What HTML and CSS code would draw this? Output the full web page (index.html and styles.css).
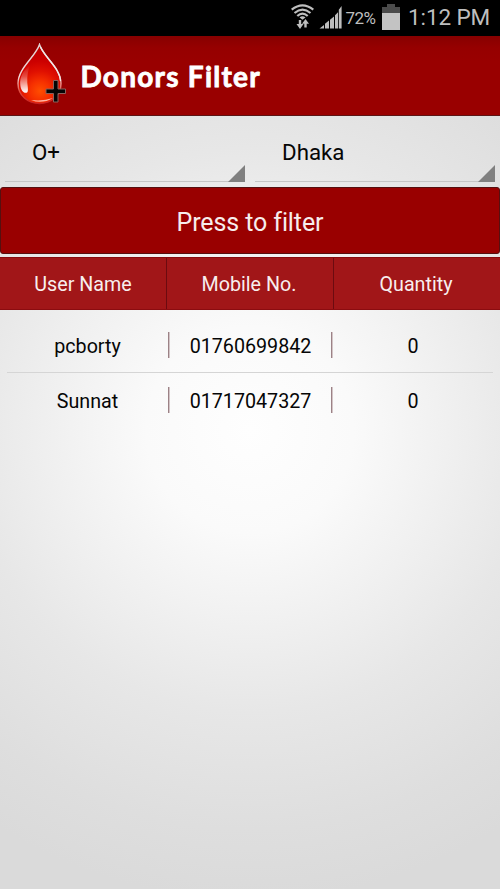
FILE: index.html
```html
<!DOCTYPE html>
<html lang="en">
<head>
<meta charset="utf-8">
<title>Donors Filter</title>
<link rel="stylesheet" href="styles.css">
</head>
<body>
<div class="status">
  <svg class="wifi" width="24" height="26" viewBox="0 0 24 26" fill="none" stroke="#bebebe">
    <path d="M.7 5.700Q11.500-2.800 22.300 5.700M3.500 9Q11.500 2.400 19.500 9M6.300 12Q11.500 7.200 16.700 12" stroke-width="2.200"/>
    <path d="M8.500 13.600Q11.500 10.800 14.500 13.600L11.500 15.800Z" fill="#bebebe" stroke="none"/>
    <path d="M9 16v5.500M14.500 23.500V18" stroke-width="2.400"/>
    <path d="M5.500 20h7L9 25ZM11 19.800h7L14.500 15Z" fill="#bebebe" stroke="none"/>
  </svg>
  <svg class="signal" width="24" height="24" viewBox="0 0 24 24" fill="#bebebe">
    <path d="M.5 23.500 5 20v3.500ZM6 18.800l4-3.300v8H6ZM11 14.800l4-3.300v12h-4ZM16 10.300l3-3v16.200H16ZM19.800 4.800 22.600 1v22.500h-2.800Z"/>
  </svg>
  <span class="percent">72%</span>
  <svg class="battery" width="18" height="26" viewBox="0 0 18 26">
    <path fill="#4b4b4b" d="M5 0h8v3h5v6H0V3h5z"/><path fill="#c3c3c3" d="M0 9h18v17H0z"/>
  </svg>
  <span class="time">1:12 PM</span>
</div>
<header class="bar">
  <svg class="logo" width="50" height="64" viewBox="0 0 50 64">
    <defs>
      <radialGradient id="blood" gradientUnits="userSpaceOnUse" cx="23" cy="48" r="40">
        <stop offset="0" stop-color="#ff4e00"/><stop offset=".25" stop-color="#f63000"/><stop offset=".5" stop-color="#e01000"/><stop offset=".75" stop-color="#cc0000"/><stop offset="1" stop-color="#c00000"/>
      </radialGradient>
      <linearGradient id="rim" x1="0" y1="0" x2="0" y2="1">
        <stop offset="0" stop-color="#e0d4d4"/><stop offset=".55" stop-color="#f3dada"/><stop offset=".8" stop-color="#dd4a3c"/><stop offset="1" stop-color="#c82020"/>
      </linearGradient>
      <linearGradient id="shine" x1="0" y1="0" x2="0" y2="1">
        <stop offset="0" stop-color="#fff" stop-opacity="0"/><stop offset=".4" stop-color="#fff" stop-opacity=".25"/><stop offset="1" stop-color="#fff"/>
      </linearGradient>
    </defs>
    <path d="M22.500 1.500C18.500 14 1 25 1 40.500 1 52.500 11 60.500 22.500 60.500S44 52.500 44 40.500C44 25 26.500 14 22.500 1.500Z" fill="url(#blood)" stroke="url(#rim)" stroke-width="1.400"/>
    <path d="M23.500 4C28 15 43 25 43.500 38" fill="none" stroke="#f0e8e8" stroke-width="1.300"/>
    <path d="M13 22C6 28 2.500 34 3.300 42c.5 5 3 8.300 6 7.800 2.500-.5 1.500-5 1-10C10 33 11 27 13 22Z" fill="url(#shine)"/>
    <path d="M14 57Q25 61.500 36 55 26 58.500 14 57Z" fill="#ffb5a5"/>
    <path d="M36.500 37.500h4.500v8.500h7.500v4.500H41v8.500h-4.500v-8.500H29V46h7.500z" fill="#050505" stroke="#8a625d" stroke-width="1"/>
  </svg>
  <h1 class="title">Donors Filter</h1>
</header>
<main>
  <div class="spinners">
    <div class="spinner"><span>O+</span></div>
    <div class="spinner"><span>Dhaka</span></div>
  </div>
  <button class="filter">Press to filter</button>
  <div class="head"><div>User Name</div><div>Mobile No.</div><div>Quantity</div></div>
  <div class="list">
    <div class="row"><div>pcborty</div><i></i><div>01760699842</div><i></i><div>0</div></div>
    <div class="row"><div>Sunnat</div><i></i><div>01717047327</div><i></i><div>0</div></div>
  </div>
</main>
</body>
</html>
```
FILE: styles.css
```css
* { box-sizing: border-box; }
body {
  margin: 0;
  width: 500px;
  height: 889px;
  overflow: hidden;
  font-family: Roboto, sans-serif;
  color: #060606;
  background: radial-gradient(circle 470px at 250px 430px, #fefefe 0, #fafafa 22%, #e7e7e7 60%, #dedede 85%, #dadada 100%);
}
.status {
  display: flex;
  height: 36px;
  padding-left: 291px;
  background: #000;
  color: #bebebe;
  white-space: nowrap;
}
.status svg { flex: none; }
.wifi { margin-top: 4px; }
.signal { margin: 5px 0 0 4px; }
.percent { width: 39px; padding-left: 2.500px; font-size: 17px; line-height: 36px; letter-spacing: -.5px; }
.battery { margin-top: 4px; }
.time { padding-left: 8px; font-size: 22.500px; line-height: 35px; letter-spacing: -.1px; }
.bar {
  display: flex;
  height: 80px;
  padding: 7px 0 0 17px;
  background: linear-gradient(#870000 0, #960000 12px, #990000 25px);
  border-bottom: 1px solid #5c1515;
}
.logo { flex: none; }
.title {
  margin: 0 0 0 13.500px;
  color: #fff;
  font: 700 28px/67px Lato, sans-serif;
  letter-spacing: 1.250px;
  -webkit-text-stroke: .8px #fff;
  white-space: nowrap;
}
.spinners { display: flex; gap: 10px; height: 71px; padding: 0 5px 5px; }
.spinner {
  position: relative;
  flex: 1;
  padding-left: 27px;
  border-bottom: 1px solid #c6c6c6;
  font-size: 22.300px;
  line-height: 73px;
}
.spinner::after {
  content: "";
  position: absolute;
  right: 0;
  bottom: -1px;
  border-left: 17px solid transparent;
  border-bottom: 17px solid #808080;
}
.filter {
  display: block;
  width: 500px;
  height: 67px;
  padding: 2px 0 0;
  border: 1px solid #551010;
  border-radius: 3px;
  background: #990000;
  color: #f7eded;
  font: 25px/65px Roboto, sans-serif;
  letter-spacing: -.1px;
}
.head {
  display: grid;
  grid-template-columns: 166px 167px 167px;
  height: 53px;
  margin-top: 3px;
  background: #a11618;
  border-top: 1px solid #870b0e;
  border-bottom: 1px solid #8b0c10;
  color: #f8eeee;
  font-size: 19.700px;
  line-height: 54px;
  text-align: center;
}
.head > div { height: 51px; }
.head > div + div { border-left: 1px solid #6c0b10; padding-right: 2px; }
.list { padding: 8px 7px; }
.row {
  display: grid;
  grid-template-columns: 161px 2px 161px 2px 160px;
  align-items: center;
  height: 55px;
  font-size: 19.700px;
  text-align: center;
}
.row:first-child { height: 54px; }
.row div { padding-top: 2px; }
.row + .row { border-top: 1px solid #d5d5d5; }
.row i { height: 26px; background: linear-gradient(90deg, #9c8286 1px, #d3c5c7 1px); }
```
